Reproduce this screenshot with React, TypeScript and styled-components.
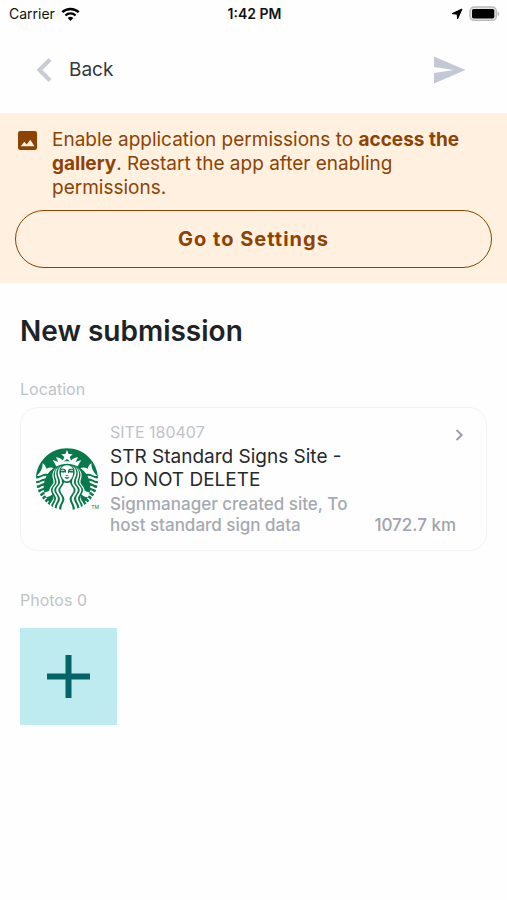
import React from "react";
import styled, { createGlobalStyle } from "styled-components";
import { SiStarbucks } from "react-icons/si";

const GlobalStyle = createGlobalStyle`
  *, *::before, *::after { box-sizing: border-box; }
  body {
    margin: 0;
    background: #fefefe;
    color: #202325;
    font-family: Inter, "Liberation Sans", sans-serif;
  }
  button { font: inherit; cursor: pointer; }
  svg { display: block; flex: none; }
`;

const StatusBar = styled.div`
  display: grid;
  grid-template-columns: 1fr auto 1fr;
  align-items: center;
  height: 28px;
  padding: 0 7px 0 9px;
  font-size: 14px;
  line-height: 20px;
  color: #111;
`;

const StatusGroup = styled.div<{ $end?: boolean }>`
  display: flex;
  align-items: center;
  gap: 6px;
  justify-content: ${(p) => (p.$end ? "flex-end" : "flex-start")};
`;

const Clock = styled.time`
  font-weight: 600;
`;

const Header = styled.header`
  display: flex;
  align-items: center;
  justify-content: space-between;
  height: 85px;
  padding: 0 41px 2px 36px;
`;

const BackButton = styled.button`
  display: flex;
  align-items: center;
  gap: 16px;
  padding: 0;
  border: 0;
  background: none;
  color: #34373a;
  font-size: 19px;
  line-height: 24px;
`;

const IconButton = styled.button`
  padding: 0;
  border: 0;
  background: none;
  color: #c3c8d4;
`;

const Banner = styled.section`
  padding: 15px;
  background: #fff0df;
  color: #8c4303;
`;

const Notice = styled.div`
  display: flex;
  align-items: flex-start;
  gap: 15px;
  padding: 0 16px 0 3px;

  svg { margin-top: 3px; }
`;

const NoticeText = styled.p`
  margin: 0;
  font-size: 19px;
  line-height: 24px;
`;

const SettingsButton = styled.button`
  width: 100%;
  height: 58px;
  margin-top: 10px;
  border: 1px solid #8c4303;
  border-radius: 29px;
  background: none;
  color: inherit;
  font-size: 20px;
  font-weight: 700;
  letter-spacing: 1px;
`;

const Content = styled.main`
  padding: 30px 20px;
`;

const Title = styled.h1`
  margin: 0 0 30px;
  font-size: 28px;
  line-height: 36px;
  font-weight: 600;
`;

const SectionLabel = styled.h2`
  margin: 0;
  color: #c0c3c9;
  font-size: 16px;
  line-height: 20px;
  font-weight: 400;
`;

const SiteCard = styled.a`
  display: flex;
  align-items: center;
  gap: 10px;
  margin: 8px 0 39px;
  padding: 14px 22px 14px 14px;
  border: 1px solid #f3f3f5;
  border-radius: 18px;
  color: inherit;
  text-decoration: none;
`;

const Logo = styled.span`
  position: relative;
  margin-left: 1px;
  padding-right: 2px;
  color: #08794a;
`;

const Trademark = styled.span`
  position: absolute;
  right: 1px;
  bottom: 0;
  font-size: 5px;
  line-height: 5px;
`;

const SiteInfo = styled.span`
  display: flex;
  flex: 1;
  flex-direction: column;
  min-width: 0;
`;

const SiteCode = styled.span`
  margin-bottom: 2px;
  color: #c0c3c9;
  font-size: 16px;
  line-height: 21px;
`;

const SiteName = styled.span`
  max-width: 250px;
  margin-bottom: 3px;
  color: #26292b;
  font-size: 19px;
  line-height: 23px;
`;

const SiteNote = styled.span`
  max-width: 250px;
  color: #a5a9b0;
  font-size: 17px;
  line-height: 21px;
  font-weight: 500;
`;

const SiteAside = styled.span`
  display: flex;
  flex-direction: column;
  align-items: flex-end;
  justify-content: space-between;
  align-self: stretch;
  flex: none;
  padding-top: 7px;
`;

const Distance = styled.span`
  margin-right: 8px;
  color: #a0a4ab;
  font-size: 17px;
  line-height: 21px;
  font-weight: 500;
`;

const AddPhoto = styled.button`
  display: grid;
  place-items: center;
  width: 97px;
  height: 97px;
  margin-top: 18px;
  padding: 0;
  border: 0;
  background: #beebf0;
  color: #056468;
`;

const WifiIcon = () => (
  <svg width="19" height="15" viewBox="0 0 19 15" fill="none" aria-label="Wi-Fi">
    <path d="M1.3 5.2a11.8 11.8 0 0 1 16.4 0" stroke="#000" strokeWidth="2.5" />
    <path d="M4.4 8.5a7.4 7.4 0 0 1 10.2 0" stroke="#000" strokeWidth="2.3" />
    <path d="M6.7 10.9a4.3 4.3 0 0 1 5.6 0L9.5 14Z" fill="#000" />
  </svg>
);

const LocationIcon = () => (
  <svg width="12" height="12" viewBox="0 0 12 12" aria-label="Location in use">
    <path d="M11 1 6.6 10.8 6.2 6.2 1.2 5.6Z" fill="#000" stroke="#000" strokeWidth="1" strokeLinejoin="round" />
  </svg>
);

const BatteryIcon = () => (
  <svg width="31" height="16" viewBox="0 0 31 16" aria-label="Battery full">
    <rect x="1" y="1" width="26.3" height="13.4" rx="4" fill="#e4e4e4" stroke="#b9b9b9" strokeWidth="1.4" />
    <rect x="3" y="3" width="22.3" height="9.4" rx="1.6" fill="#000" />
    <path d="M28.6 5.4c2.3.9 2.3 3.7 0 4.6Z" fill="#b9b9b9" />
  </svg>
);

const BackIcon = () => (
  <svg width="17" height="26" viewBox="0 0 17 26" fill="none" aria-hidden="true">
    <path d="M14 2.5 3.5 13 14 23.5" stroke="#c6cbd6" strokeWidth="4" />
  </svg>
);

const SendIcon = () => (
  <svg width="33" height="28" viewBox="0 0 33 28" aria-hidden="true">
    <path d="M1 .5 32.5 14 1 27.5V17l20-3-20-3Z" fill="currentColor" />
  </svg>
);

const GalleryIcon = () => (
  <svg width="19" height="19" viewBox="0 0 19 19" aria-hidden="true">
    <rect width="19" height="19" rx="2.2" fill="#8c4303" />
    <path d="m2.8 15.3 3.5-4.5 2.4 2.7 3.6-4.7 4.2 6.5Z" fill="#fff0df" />
  </svg>
);

const ChevronIcon = () => (
  <svg width="9" height="12" viewBox="0 0 9 12" fill="none" aria-hidden="true">
    <path d="m1.5 1 5.2 5-5.2 5" stroke="#9b9fa6" strokeWidth="2" />
  </svg>
);

const PlusIcon = () => (
  <svg width="43" height="43" viewBox="0 0 43 43" aria-hidden="true">
    <path d="M18.5 0h6v18.5H43v6H24.5V43h-6V24.5H0v-6h18.5Z" fill="currentColor" />
  </svg>
);

export default function App() {
  return (
    <>
      <GlobalStyle />
      <StatusBar>
        <StatusGroup>
          <span>Carrier</span>
          <WifiIcon />
        </StatusGroup>
        <Clock>1:42 PM</Clock>
        <StatusGroup $end>
          <LocationIcon />
          <BatteryIcon />
        </StatusGroup>
      </StatusBar>
      <Header>
        <BackButton type="button">
          <BackIcon />
          Back
        </BackButton>
        <IconButton type="button" aria-label="Send">
          <SendIcon />
        </IconButton>
      </Header>
      <Banner>
        <Notice>
          <GalleryIcon />
          <NoticeText>
            Enable application permissions to <strong>access the gallery</strong>. Restart the app after
            enabling permissions.
          </NoticeText>
        </Notice>
        <SettingsButton type="button">Go to Settings</SettingsButton>
      </Banner>
      <Content>
        <Title>New submission</Title>
        <SectionLabel>Location</SectionLabel>
        <SiteCard href="#site">
          <Logo>
            <SiStarbucks size={62} aria-label="Starbucks" />
            <Trademark>TM</Trademark>
          </Logo>
          <SiteInfo>
            <SiteCode>SITE 180407</SiteCode>
            <SiteName>STR Standard Signs Site - DO NOT DELETE</SiteName>
            <SiteNote>Signmanager created site, To host standard sign data</SiteNote>
          </SiteInfo>
          <SiteAside>
            <ChevronIcon />
            <Distance>1072.7 km</Distance>
          </SiteAside>
        </SiteCard>
        <SectionLabel>Photos 0</SectionLabel>
        <AddPhoto type="button" aria-label="Add photo">
          <PlusIcon />
        </AddPhoto>
      </Content>
    </>
  );
}
